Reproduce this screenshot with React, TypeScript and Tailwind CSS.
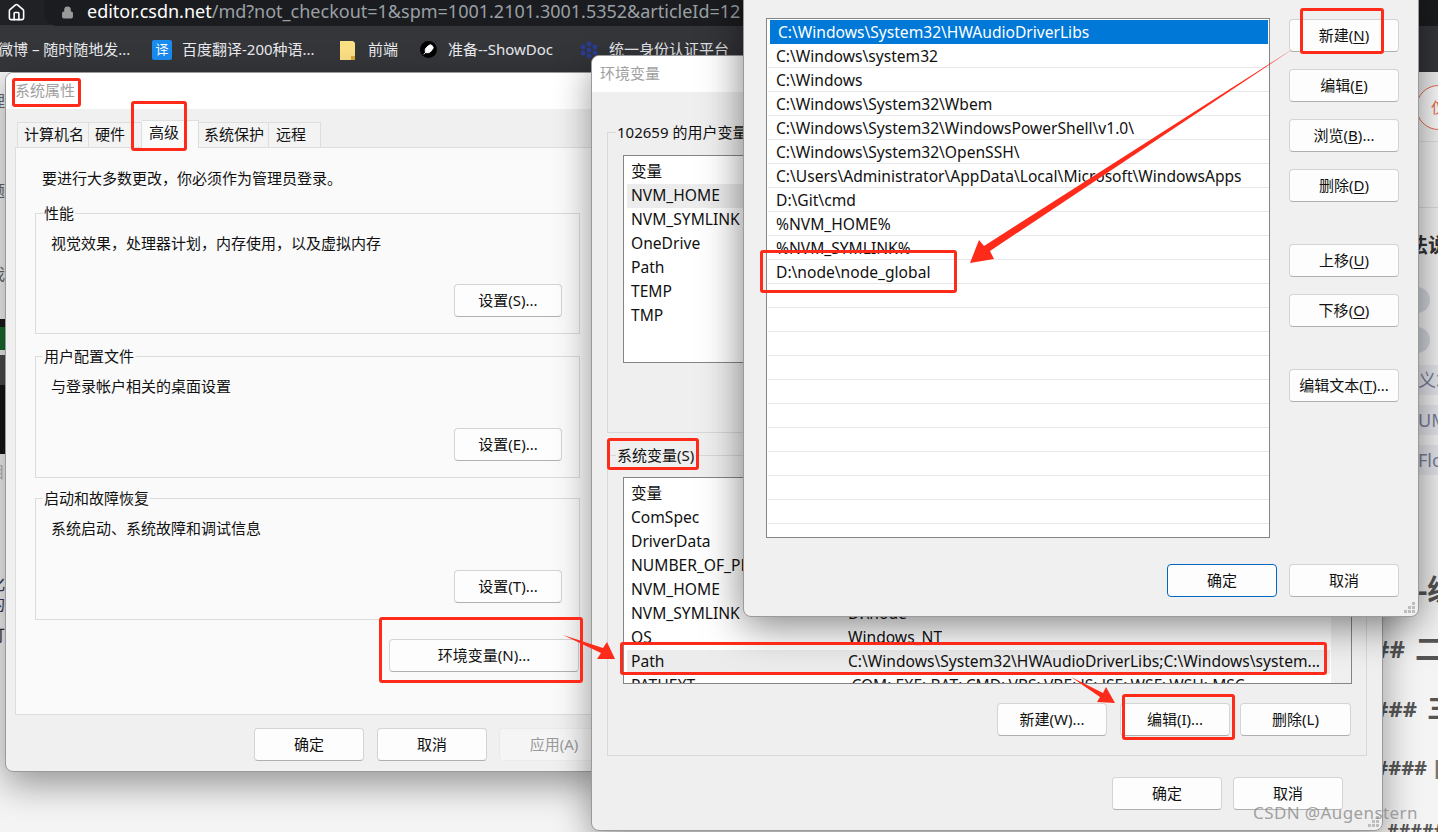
import type { ReactNode } from 'react';
import { Feather, Home, Lock } from 'lucide-react';

const userVars = ['NVM_HOME', 'NVM_SYMLINK', 'OneDrive', 'Path', 'TEMP', 'TMP'];

const systemVars: [string, string][] = [
  ['ComSpec', ''],
  ['DriverData', ''],
  ['NUMBER_OF_PROCESSORS', ''],
  ['NVM_HOME', ''],
  ['NVM_SYMLINK', 'D:\\node'],
  ['OS', 'Windows_NT'],
  ['Path', 'C:\\Windows\\System32\\HWAudioDriverLibs;C:\\Windows\\system...'],
  ['PATHEXT', '.COM;.EXE;.BAT;.CMD;.VBS;.VBE;.JS;.JSE;.WSF;.WSH;.MSC'],
];

const pathRows = [
  'C:\\Windows\\System32\\HWAudioDriverLibs',
  'C:\\Windows\\system32',
  'C:\\Windows',
  'C:\\Windows\\System32\\Wbem',
  'C:\\Windows\\System32\\WindowsPowerShell\\v1.0\\',
  'C:\\Windows\\System32\\OpenSSH\\',
  'C:\\Users\\Administrator\\AppData\\Local\\Microsoft\\WindowsApps',
  'D:\\Git\\cmd',
  '%NVM_HOME%',
  '%NVM_SYMLINK%',
  'D:\\node\\node_global',
  '', '', '', '', '', '', '', '', '', '',
];

function WinButton({ children, className = 'w-[110px]' }: { children: ReactNode; className?: string }) {
  return (
    <div className={`h-[33px] shrink-0 flex items-center justify-center rounded-[4px] border border-[#d4d4d4] border-b-[#b0b0b0] bg-[#fdfdfd] text-[15px] text-[#111] ${className}`}>
      {children}
    </div>
  );
}

function Mn({ label, k, tail = '' }: { label: string; k: string; tail?: string }) {
  return (
    <span>
      {label}(<span className="underline underline-offset-2">{k}</span>){tail}
    </span>
  );
}

function Group({ title, text, button, className }: { title: string; text: string; button: string; className: string }) {
  return (
    <div className={`relative ml-[19px] w-[545px] flex flex-col border border-[#dcdcdc] ${className}`}>
      <span className="absolute -top-[11px] left-[7px] bg-[#fafafa] px-[1px] text-[15px] leading-[20px] text-[#111]">{title}</span>
      <div className="pl-[15px] pt-[19px] text-[15px] leading-[20px] text-[#111]">{text}</div>
      <WinButton className="w-[108px] self-end mt-auto mb-[16px] mr-[17px]">{button}</WinButton>
    </div>
  );
}

function Tab({ label, active, className }: { label: string; active?: boolean; className: string }) {
  return (
    <div className={`flex items-center pl-[6px] border border-b-0 border-[#dedede] text-[15px] text-[#111] ${active ? 'h-[28px] bg-[#fafafa] -mb-[1px] relative pb-[5px]' : 'h-[25px] bg-[#f3f3f3] pb-[2px]'} ${className}`}>
      {label}
    </div>
  );
}

function GripDots() {
  return (
    <svg width="13" height="13" viewBox="0 0 13 13" className="absolute bottom-[2px] right-[2px] text-[#bdbdbd]">
      {[[9, 1], [5, 5], [9, 5], [1, 9], [5, 9], [9, 9]].map(([x, y]) => (
        <rect key={`${x}-${y}`} x={x} y={y} width="3" height="3" fill="currentColor" />
      ))}
    </svg>
  );
}

function VarRow({ name, value, tint }: { name: string; value?: string; tint?: boolean }) {
  return (
    <div className={`ml-[3px] w-[703px] h-[24px] shrink-0 flex items-center pl-[4px] text-[15.6px] text-[#111] whitespace-nowrap ${tint ? 'bg-[#ececec]' : ''}`}>
      <span className="w-[217px] shrink-0 overflow-hidden">{name}</span>
      <span className="overflow-hidden">{value}</span>
    </div>
  );
}

function RedBox({ className }: { className: string }) {
  return <div className={`absolute z-40 border-[3px] border-[#fe2a1a] rounded-[3px] ${className}`} />;
}

export default function App() {
  return (
    <div className="relative w-[1438px] h-[832px] overflow-hidden bg-[#f4f4f4] font-['Noto_Sans','Noto_Sans_CJK_SC',sans-serif]">
      {/* BROWSER CHROME */}
      <div className="h-[25px] bg-[#202124] flex items-end text-white">
        <Home size={19} strokeWidth={2} className="ml-[7px] mb-[3px] shrink-0" />
        <div className="ml-[18px] w-[1420px] h-[27px] -mb-[1px] flex items-center rounded-bl-[14px] bg-[#1b1c1f] pl-[17px]">
          <Lock size={13} fill="#9a9a9a" stroke="#9a9a9a" className="shrink-0" />
          <span className="ml-[13px] text-[18px] leading-none whitespace-nowrap -mt-[4px]">
            editor.csdn.net<span className="text-[#9aa0a6]">/md?not_checkout=1&amp;spm=1001.2101.3001.5352&amp;articleId=12</span>
          </span>
        </div>
      </div>
      <div className="h-[47px] bg-[#35363a] flex items-center pt-[2px] text-[15px] text-[#e8eaed] whitespace-nowrap">
        <span className="w-[154px] -ml-[2px]">微博 – 随时随地发...</span>
        <span className="w-[20px] h-[20px] rounded-[2px] bg-[#1a8cf0] text-white text-[13px] flex items-center justify-center">译</span>
        <span className="ml-[10px] w-[158px]">百度翻译-200种语...</span>
        <svg width="15" height="20" viewBox="0 0 15 20">
          <path d="M0 1h13l2 2v17H0z" fill="#fbdf85" />
          <path d="M11 16h4v4h-4z" fill="#d9a93a" />
        </svg>
        <span className="ml-[13px] w-[52px]">前端</span>
        <span className="w-[17px] h-[17px] rounded-full bg-black text-white flex items-center justify-center">
          <Feather size={11} fill="white" stroke="white" />
        </span>
        <span className="ml-[11px] w-[132px]">准备--ShowDoc</span>
        <svg width="18" height="18" viewBox="0 0 18 18" fill="#283e9c">
          {[[9, 3], [3, 6], [15, 6], [9, 9], [3, 12], [15, 12], [9, 15]].map(([x, y]) => (
            <circle key={`${x}-${y}`} cx={x} cy={y} r="2.4" />
          ))}
        </svg>
        <span className="ml-[11px]">统一身份认证平台</span>
      </div>

      {/* PAGE BEHIND THE WINDOWS */}
      <div className="h-[760px] flex justify-between">
        <div className="w-[5px] overflow-hidden flex flex-col text-[16px] leading-[20px] text-[#666] whitespace-nowrap">
          <div className="h-[19px] shrink-0" />
          <span className="h-[20px] shrink-0 -ml-[11px]">理</span>
          <div className="h-[70px] shrink-0" />
          <span className="h-[20px] shrink-0 -ml-[11px]">题</span>
          <div className="h-[63px] shrink-0" />
          <span className="h-[20px] shrink-0 -ml-[11px]">我</span>
          <div className="h-[35px] shrink-0" />
          <div className="h-[8px] shrink-0 bg-[#1b1b1b]" />
          <div className="h-[23px] shrink-0 bg-[#176c2d]" />
          <div className="h-[5px] shrink-0 bg-[#eee]" />
          <div className="h-[30px] shrink-0 bg-[#4a4a4a]" />
          <div className="h-[69px] shrink-0 bg-[#141414]" />
          <div className="h-[8px] shrink-0" />
          <span className="h-[20px] shrink-0 -ml-[11px] text-[#bbb]">目</span>
          <div className="h-[92px] shrink-0" />
          <span className="h-[20px] shrink-0 -ml-[11px] text-[#335]">化</span>
          <span className="h-[20px] shrink-0 -ml-[11px] text-[#335]">的</span>
          <div className="h-[11px] shrink-0" />
          <span className="h-[20px] shrink-0 -ml-[11px] text-[#333]">订</span>
        </div>
        <div className="w-[56px] overflow-hidden flex flex-col whitespace-nowrap text-[#555]">
          <div className="h-[13px] shrink-0" />
          <div className="ml-[34px] w-[50px] h-[45px] shrink-0 rounded-full border border-[#ef6b4d] bg-white flex items-center pl-[14px] text-[15px] text-[#ef6b4d]">
            仅
          </div>
          <div className="h-[12px] shrink-0 border-b border-[#e2e2e2]" />
          <div className="h-[66px] shrink-0 border-b border-[#ddd]" />
          <div className="h-[27px] shrink-0" />
          <div className="h-[22px] shrink-0 pl-[26px] text-[20px] leading-[22px] font-bold text-[#333]">法说</div>
          <div className="h-[30px] shrink-0" />
          <div className="ml-[21px] w-[27px] h-[26px] shrink-0 rounded-full bg-[#d3d7de]" />
          <div className="h-[14px] shrink-0" />
          <div className="ml-[21px] w-[27px] h-[26px] shrink-0 rounded-full bg-[#d3d7de]" />
          <div className="h-[12px] shrink-0" />
          <div className="pl-[36px] h-[30px] shrink-0 bg-[#e6e8ee] text-[18px] leading-[30px] text-[#7a8099]">义才</div>
          <div className="h-[10px] shrink-0" />
          <div className="pl-[36px] h-[30px] shrink-0 bg-[#e6e8ee] text-[18px] leading-[30px] text-[#7a8099]">UML</div>
          <div className="h-[10px] shrink-0" />
          <div className="pl-[36px] h-[30px] shrink-0 bg-[#e6e8ee] text-[18px] leading-[30px] text-[#7a8099]">Flow</div>
          <div className="h-[95px] shrink-0" />
          <div className="pl-[36px] h-[40px] shrink-0 text-[29px] leading-[40px] font-bold">-级</div>
          <div className="h-[19px] shrink-0" />
          <div className="flex h-[40px] shrink-0 leading-[40px] font-bold">
            <span className="w-[23px] flex justify-end text-[24px]">##</span>
            <span className="ml-[10px] text-[29px]">二</span>
          </div>
          <div className="h-[19px] shrink-0" />
          <div className="flex h-[40px] shrink-0 leading-[40px] font-bold">
            <span className="w-[35px] flex justify-end text-[22px]">###</span>
            <span className="ml-[10px] text-[26px]">三</span>
          </div>
          <div className="h-[20px] shrink-0" />
          <div className="flex h-[40px] shrink-0 leading-[40px] font-bold">
            <span className="w-[45px] flex justify-end text-[20px]">####</span>
            <span className="ml-[7px] text-[22px] text-[#777]">四</span>
          </div>
          <div className="h-[30px] shrink-0" />
          <div className="h-[24px] shrink-0 pl-[5px] text-[18px] leading-[24px] font-bold">#####</div>
        </div>
      </div>

      {/* SYSTEM PROPERTIES */}
      <div className="absolute z-10 left-[5px] top-[72px] w-[600px] h-[700px] rounded-[8px] overflow-hidden flex flex-col bg-[#f0f0f0] border border-[#9a9a9a] shadow-[0_12px_36px_rgba(0,0,0,0.4)]">
        <div className="h-[36px] shrink-0 bg-white flex items-center pl-[9px] pb-[1px] text-[15px] text-[#a0a0a0]">系统属性</div>
        <div className="h-[38px] shrink-0 pl-[11px] flex items-end">
          <Tab label="计算机名" className="w-[72px]" />
          <Tab label="硬件" className="w-[53px] border-l-0" />
          <Tab label="高级" active className="w-[57px] border-l-0 !pl-[7px]" />
          <Tab label="系统保护" className="w-[70px] border-l-0 !pl-[5px]" />
          <Tab label="远程" className="w-[52px] border-l-0 !pl-[7px]" />
        </div>
        <div className="ml-[9px] w-[600px] h-[568px] shrink-0 bg-[#fafafa] border border-[#dedede]">
          <div className="pl-[26px] pt-[20px] text-[15px] leading-[20px] text-[#111]">要进行大多数更改，你必须作为管理员登录。</div>
          <Group title="性能" text="视觉效果，处理器计划，内存使用，以及虚拟内存" button="设置(S)..." className="mt-[25px] h-[121px]" />
          <Group title="用户配置文件" text="与登录帐户相关的桌面设置" button="设置(E)..." className="mt-[22px] h-[122px]" />
          <Group title="启动和故障恢复" text="系统启动、系统故障和调试信息" button="设置(T)..." className="mt-[20px] h-[122px]" />
          <WinButton className="w-[190px] mt-[19px] ml-[373px]">环境变量(N)...</WinButton>
        </div>
        <div className="mt-[13px] ml-[248px] flex">
          <WinButton>确定</WinButton>
          <WinButton className="w-[110px] ml-[13px]">取消</WinButton>
          <WinButton className="w-[110px] ml-[12px] !text-[#9a9a9a] !bg-[#f5f5f5] !border-[#eaeaea]">应用(A)</WinButton>
        </div>
      </div>

      {/* ENVIRONMENT VARIABLES */}
      <div className="absolute z-20 left-[591px] top-[55px] w-[792px] h-[776px] rounded-[8px] overflow-hidden flex flex-col bg-[#efefef] border border-[#9a9a9a] shadow-[0_12px_36px_rgba(0,0,0,0.4)]">
        <GripDots />
        <div className="h-[36px] shrink-0 bg-white flex items-center pl-[8px] pb-[2px] text-[15px] text-[#a0a0a0]">环境变量</div>
        <div className="relative mt-[40px] ml-[15px] w-[760px] h-[301px] shrink-0 border border-[#d8d8d8]">
          <span className="absolute -top-[11px] left-[8px] bg-[#efefef] px-[1px] text-[15px] leading-[20px] text-[#111]">102659 的用户变量(U)</span>
          <div className="mt-[22px] ml-[15px] w-[729px] h-[208px] flex flex-col border border-[#858585] bg-white pt-[4px]">
            <VarRow name="变量" />
            {userVars.map(v => <VarRow key={v} name={v} tint={v === 'NVM_HOME'} />)}
          </div>
        </div>
        <div className="relative mt-[22px] ml-[15px] w-[760px] h-[301px] shrink-0 border border-[#d8d8d8]">
          <span className="absolute -top-[11px] left-[8px] bg-[#efefef] px-[1px] text-[15px] leading-[20px] text-[#111]">系统变量(S)</span>
          <div className="relative mt-[21px] ml-[15px] w-[729px] h-[207px] flex flex-col overflow-hidden border border-[#858585] bg-white pt-[4px]">
            <div className="absolute right-0 top-0 w-[20px] h-full bg-[#f0f0f0]" />
            <VarRow name="变量" />
            {systemVars.map(([n, v]) => <VarRow key={n} name={n} value={v} tint={n === 'Path'} />)}
          </div>
          <div className="mt-[19px] ml-[389px] flex">
            <WinButton>新建(W)...</WinButton>
            <WinButton className="w-[110px] ml-[13px]">编辑(I)...</WinButton>
            <WinButton className="w-[111px] ml-[10px]">删除(L)</WinButton>
          </div>
        </div>
        <div className="mt-[21px] ml-[520px] flex">
          <WinButton>确定</WinButton>
          <WinButton className="w-[110px] ml-[11px]">取消</WinButton>
        </div>
      </div>

      {/* EDIT PATH */}
      <div className="absolute z-30 left-[743px] -top-[20px] w-[676px] h-[637px] rounded-[8px] overflow-hidden flex flex-col bg-[#f0f0f0] border border-[#9a9a9a] shadow-[0_8px_40px_rgba(0,0,0,0.5)]">
        <GripDots />
        <div className="mt-[37px] ml-[22px] flex">
          <div className="w-[504px] h-[520px] shrink-0 flex flex-col border border-[#858585] bg-white pt-[1px]">
            {pathRows.map((p, i) => (
              <div
                key={i}
                className={`h-[24px] shrink-0 flex items-center pl-[8px] pt-[3px] text-[15.6px] whitespace-nowrap border-b ${
                  i === 0
                    ? 'ml-[3px] mr-[1px] pl-[5px] bg-[#0078d7] text-white border-[#0078d7]'
                    : 'ml-[1px] text-[#111] border-[#e8e8e8]'
                }`}
              >
                {p}
              </div>
            ))}
          </div>
          <div className="ml-[19px] mt-[1px] flex flex-col">
            <WinButton><Mn label="新建" k="N" /></WinButton>
            <WinButton className="w-[110px] mt-[17px]"><Mn label="编辑" k="E" /></WinButton>
            <WinButton className="w-[110px] mt-[17px]"><Mn label="浏览" k="B" tail="..." /></WinButton>
            <WinButton className="w-[110px] mt-[17px]"><Mn label="删除" k="D" /></WinButton>
            <WinButton className="w-[110px] mt-[42px]"><Mn label="上移" k="U" /></WinButton>
            <WinButton className="w-[110px] mt-[17px]"><Mn label="下移" k="O" /></WinButton>
            <WinButton className="w-[110px] mt-[42px]"><Mn label="编辑文本" k="T" tail="..." /></WinButton>
          </div>
        </div>
        <div className="mt-[26px] ml-[423px] flex">
          <WinButton className="w-[110px] !border-[#0067c0]">确定</WinButton>
          <WinButton className="w-[110px] ml-[12px]">取消</WinButton>
        </div>
      </div>

      {/* RED ANNOTATIONS */}
      <RedBox className="left-[12px] top-[78px] w-[69px] h-[29px]" />
      <RedBox className="left-[131px] top-[101px] w-[56px] h-[50px]" />
      <RedBox className="left-[379px] top-[617px] w-[204px] h-[66px]" />
      <RedBox className="left-[607px] top-[438px] w-[92px] h-[32px]" />
      <RedBox className="left-[620px] top-[642px] w-[707px] h-[33px]" />
      <RedBox className="left-[1122px] top-[694px] w-[113px] h-[46px]" />
      <RedBox className="left-[760px] top-[250px] w-[197px] h-[43px]" />
      <RedBox className="left-[1300px] top-[8px] w-[84px] h-[46px]" />
      <svg className="absolute inset-0 z-40 pointer-events-none" width="1438" height="832" viewBox="0 0 1438 832" fill="#fe2a1a">
        <polygon points="1296,47 990,251 994,259 970,263 979,240 984,246" />
        <polygon points="563,635 603,648 607,642 615,659 597,659 601,653" />
        <polygon points="1071,677 1103,693 1106,687 1115,703 1097,702 1100,697" />
      </svg>

      {/* WATERMARK */}
      <span className="absolute z-50 left-[1253px] top-[802px] text-[17px] leading-[22px] tracking-[0.4px] text-[#8a8a8a]/80 whitespace-nowrap">CSDN @Augenstern</span>
    </div>
  );
}
